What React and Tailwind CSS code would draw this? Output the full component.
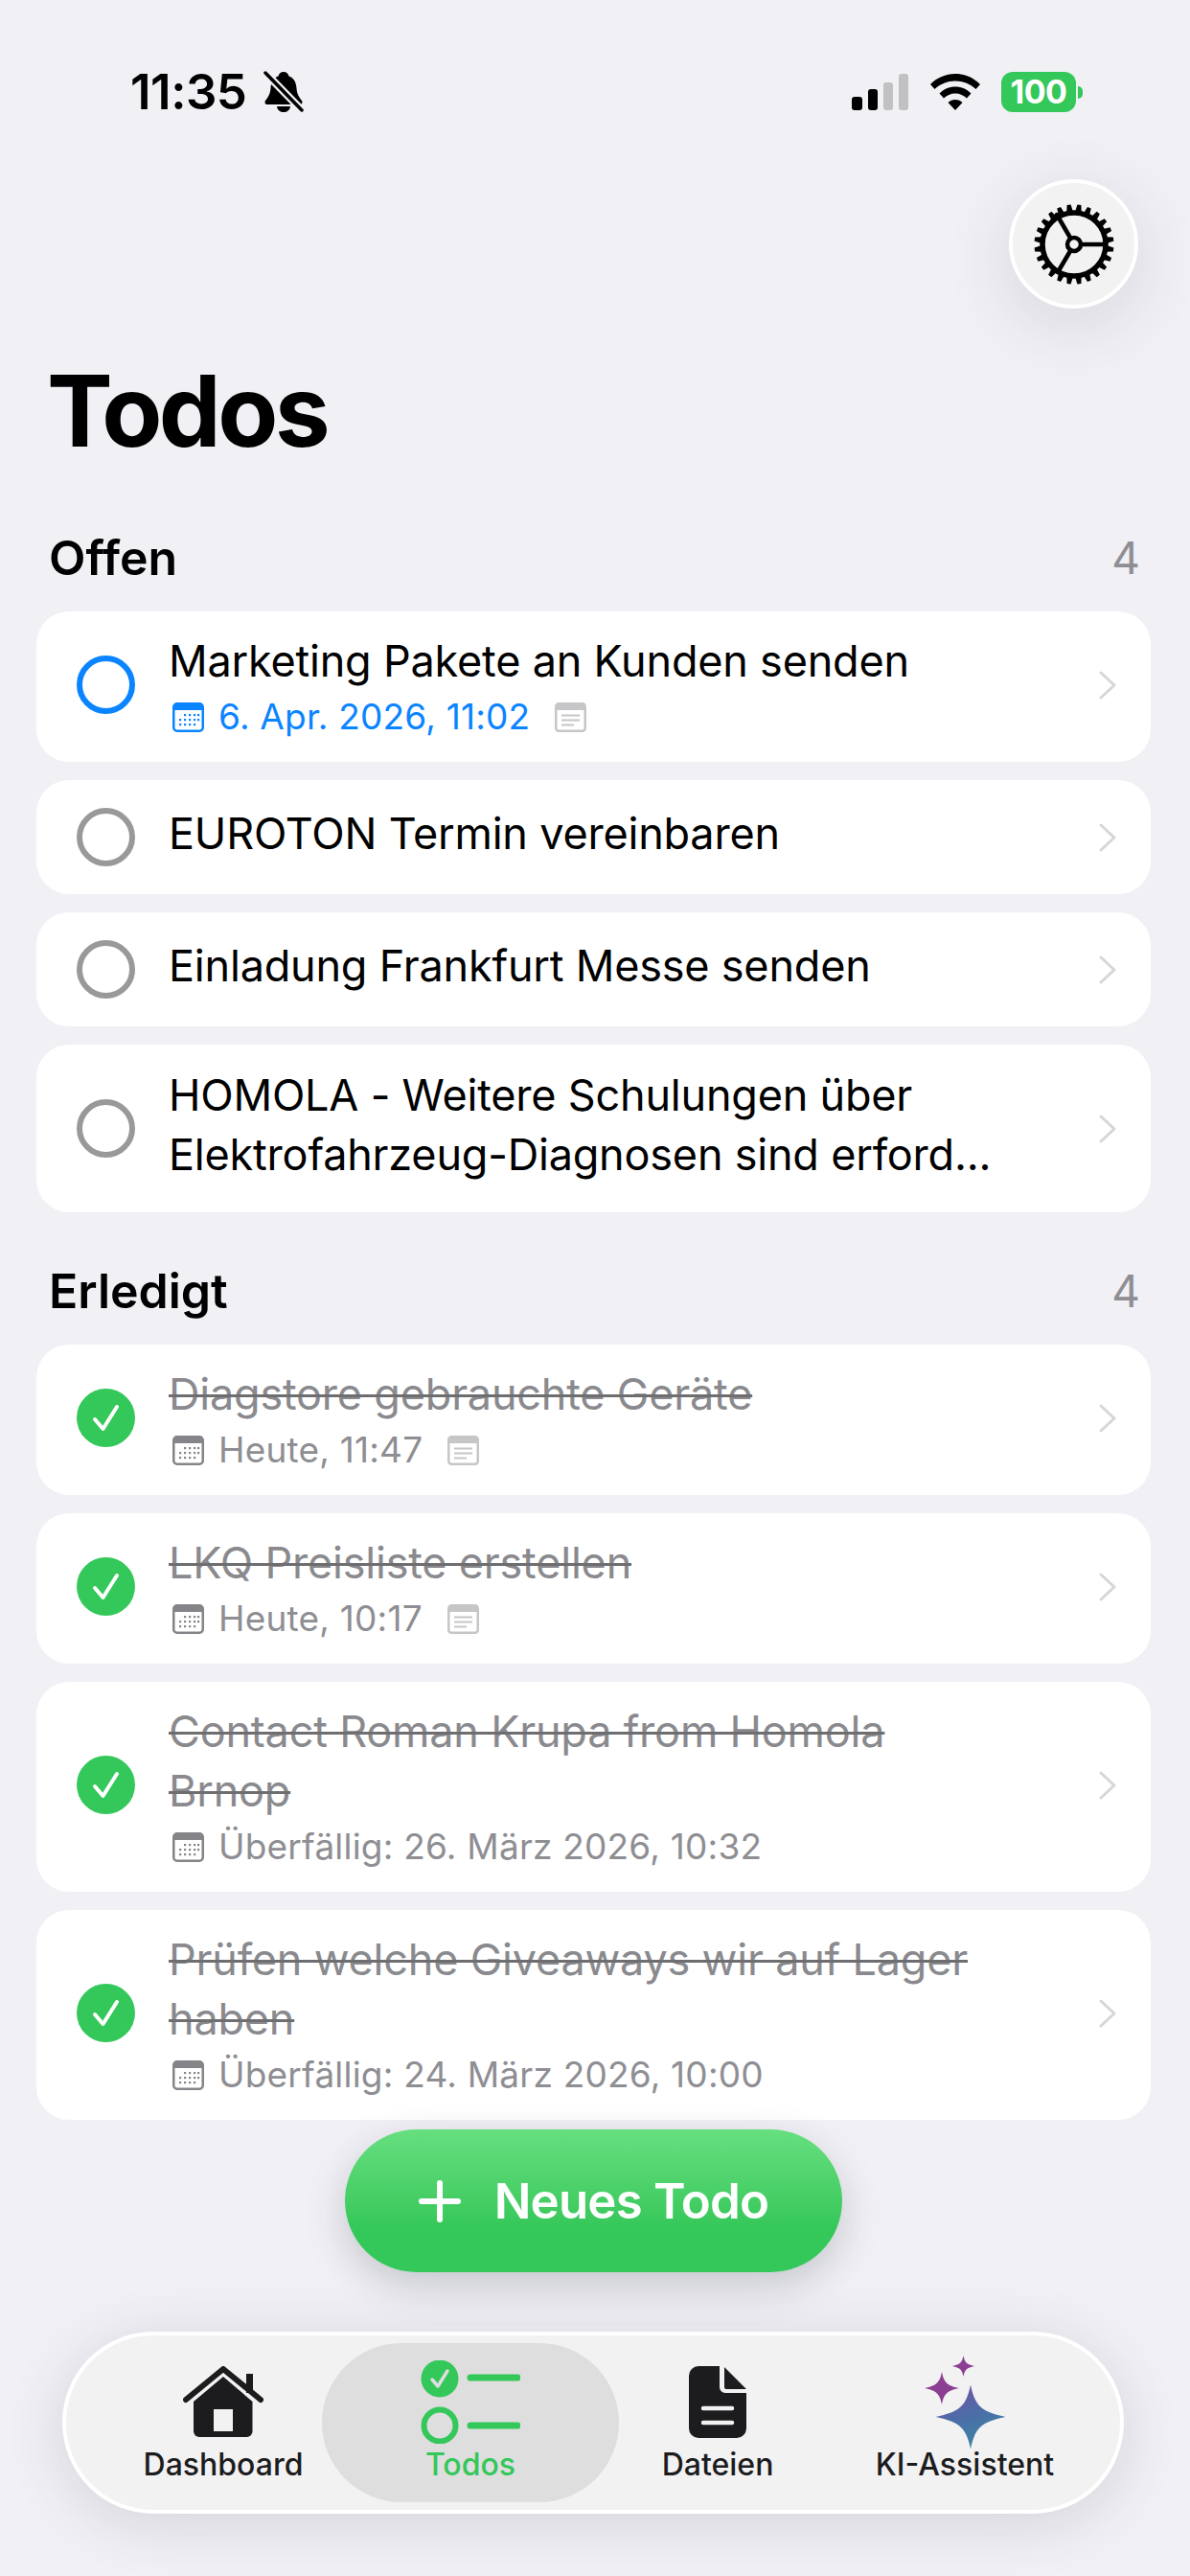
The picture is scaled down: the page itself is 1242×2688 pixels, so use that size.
import React from 'react';

const openTodos = [
  { title: 'Marketing Pakete an Kunden senden', meta: '6. Apr. 2026, 11:02', note: true, highlight: true },
  { title: 'EUROTON Termin vereinbaren' },
  { title: 'Einladung Frankfurt Messe senden' },
  { title: 'HOMOLA - Weitere Schulungen über Elektrofahrzeug-Diagnosen sind erford...' },
];

const doneTodos = [
  { title: 'Diagstore gebrauchte Geräte', meta: 'Heute, 11:47', note: true },
  { title: 'LKQ Preisliste erstellen', meta: 'Heute, 10:17', note: true },
  { title: 'Contact Roman Krupa from Homola Brnop', meta: 'Überfällig: 26. März 2026, 10:32' },
  { title: 'Prüfen welche Giveaways wir auf Lager haben', meta: 'Überfällig: 24. März 2026, 10:00' },
];

const STAR = 'M0 -1C.13 -.32 .32 -.16 1 0C.32 .16 .13 .32 0 1C-.13 .32 -.32 .16 -1 0C-.32 -.16 -.13 -.32 0 -1Z';

function BellOff() {
  return (
    <svg width="42" height="44" viewBox="0 0 42 44">
      <path d="M21 1c3 0 5 2 5.500 4.500C32 7.500 34 12 34.500 18c.4 5 1.500 8 5.500 13 1 1.500 .5 4-2 4H4c-2.500 0-3-2.500-2-4 4-5 5-8 5.500-13C8 12 10 7.500 15.500 5.500 16 3 18 1 21 1Z" fill="#000" />
      <path d="M14 37h14c-.5 4-3.500 6-7 6s-6.500-2-7-6Z" fill="#000" />
      <path d="M1 1L41 42" stroke="#f0f0f5" strokeWidth="8" />
      <path d="M2 2L40 41" stroke="#000" strokeWidth="3.500" strokeLinecap="round" />
    </svg>
  );
}

function StatusIcons() {
  return (
    <div className="flex items-center">
      <div className="flex items-end gap-[6px] h-[38px]">
        <div className="w-[11px] h-[14px] rounded-[3px] bg-black" />
        <div className="w-[10px] h-[22px] rounded-[3px] bg-black" />
        <div className="w-[10px] h-[29px] rounded-[3px] bg-[#c1c1c4]" />
        <div className="w-[10px] h-[38px] rounded-[3px] bg-[#c1c1c4]" />
      </div>
      <svg className="ml-[23px]" width="52" height="38" viewBox="0 0 52 38">
        <path d="M26 0C36 0 45 4 52 11L47.500 16C41.500 10.500 34 7.500 26 7.500S10.500 10.500 4.500 16L0 11C7 4 16 0 26 0Z" fill="#000" />
        <path d="M26 13.500C32.500 13.500 38 16 42.500 20.500L38 25.500C35 22.500 30.500 20.500 26 20.500S17 22.500 14 25.500L9.500 20.500C14 16 19.500 13.500 26 13.500Z" fill="#000" />
        <path d="M26 27C29 27 31.500 28 33.500 30L26 38L18.500 30C20.500 28 23 27 26 27Z" fill="#000" />
      </svg>
      <div className="ml-[22px] flex items-center">
        <div className="w-[78px] h-[42px] rounded-[12px] bg-[#34c759] flex items-center justify-center text-white text-[34px] font-bold leading-none tracking-[-0.5px]">100</div>
        <div className="ml-[2px] w-[5px] h-[13px] rounded-r-full bg-[#34c759]" />
      </div>
    </div>
  );
}

function GearIcon() {
  const teeth = Array.from({ length: 24 }, (_, i) => i * 15);
  return (
    <svg width="86" height="86" viewBox="-43 -43 86 86">
      {teeth.map(a => (
        <path key={a} d="M-3.500 -33L-2 -41.500H2L3.500 -33Z" fill="#000" transform={`rotate(${a + 7.5})`} />
      ))}
      <circle r="33" fill="none" stroke="#000" strokeWidth="5.500" />
      <g stroke="#000" strokeWidth="4.500" strokeLinecap="round">
        <path d="M8 0H33" />
        <path d="M-4 7L-17 29" />
        <path d="M-4 -7L-18 -31" />
      </g>
      <circle r="7" fill="none" stroke="#000" strokeWidth="4.500" />
    </svg>
  );
}

function CalendarIcon({ color }) {
  return (
    <svg width="33" height="31" viewBox="0 0 33 31">
      <rect x="1.250" y="1.250" width="30.500" height="28.500" rx="3.500" fill="#fff" stroke={color} strokeWidth="2.500" />
      <path d="M1 8V4.500A3.500 3.500 0 0 1 4.500 1H28.500A3.500 3.500 0 0 1 32 4.500V8Z" fill={color} />
      {[12, 17, 22].map(y => [8, 13, 18, 23, 27].map(x => (
        (y === 12 && x < 12) || (y === 22 && x > 24) ? null : <rect key={`${x}-${y}`} x={x - 1} y={y} width="2.200" height="2.200" fill={color} />
      )))}
    </svg>
  );
}

function NoteIcon() {
  return (
    <svg width="33" height="31" viewBox="0 0 33 31">
      <rect x="1.250" y="1.250" width="30.500" height="28.500" rx="3" fill="#fff" stroke="#c6c6c8" strokeWidth="2.500" />
      <path d="M1 8V4A3 3 0 0 1 4 1H29A3 3 0 0 1 32 4V8Z" fill="#c6c6c8" />
      <path d="M7 13.500H26M7 18.500H26M7 23.500H20" stroke="#c6c6c8" strokeWidth="2" />
    </svg>
  );
}

function Chevron() {
  return (
    <svg className="shrink-0" width="20" height="32" viewBox="0 0 20 32" fill="none">
      <path d="M3 3L17 16L3 29" stroke="#d6d6d8" strokeWidth="3" strokeLinecap="round" strokeLinejoin="round" />
    </svg>
  );
}

function StatusCircle({ done, highlight }) {
  if (done) {
    return (
      <div className="shrink-0 w-[61px] h-[61px] rounded-full bg-[#34c759] flex items-center justify-center">
        <svg width="30" height="30" viewBox="0 0 30 30" fill="none">
          <path d="M3 16L11.500 26L26 3" stroke="#fff" strokeWidth="4" strokeLinecap="round" strokeLinejoin="round" />
        </svg>
      </div>
    );
  }
  return (
    <div className={`shrink-0 w-[61px] h-[61px] rounded-full border-[6px] ${highlight ? 'border-[#0a84ff]' : 'border-[#999999]'}`} />
  );
}

function TodoCard({ todo, done }) {
  const twoLine = todo.title.length > 36;
  const padding = todo.meta ? 'pt-[21px] pb-[25px]' : twoLine ? 'py-[21.5px]' : 'py-[24.5px]';
  return (
    <div className={`flex items-center bg-white rounded-[34px] pl-[42px] pr-[35px] ${padding}`}>
      <StatusCircle done={done} highlight={todo.highlight} />
      <div className={`ml-[35px] w-[866px] shrink-0 ${todo.meta ? '' : 'pb-[8px]'}`}>
        <div className={`text-[45px] leading-[62px] tracking-[-0.2px] ${done ? 'text-[#8a8a8e] line-through decoration-[#6e6e70] decoration-[3px]' : 'text-black'}`}>
          {todo.title}
        </div>
        {todo.meta && (
          <div className={`mt-[5px] flex items-center h-[44px] text-[37px] tracking-[0.2px] ${todo.highlight ? 'text-[#0a84ff]' : 'text-[#8e8e93]'}`}>
            <span className="ml-[4px] flex"><CalendarIcon color={todo.highlight ? '#0a84ff' : '#858589'} /></span>
            <span className="ml-[15px]">{todo.meta}</span>
            {todo.note && <span className="ml-[26px] flex"><NoteIcon /></span>}
          </div>
        )}
      </div>
      <div className="ml-auto flex">
        <Chevron />
      </div>
    </div>
  );
}

function Section({ title, todos, done, className }) {
  return (
    <section className={className}>
      <div className="flex items-center justify-between pl-[13px] pr-[11px] h-[60px] mb-[26px]">
        <h2 className="text-[50px] leading-[60px] font-semibold text-black tracking-[0px]">{title}</h2>
        <span className="text-[46px] leading-[60px] text-[#8e8e93]">{todos.length}</span>
      </div>
      <div className="flex flex-col gap-[19px]">
        {todos.map(t => <TodoCard key={t.title} todo={t} done={done} />)}
      </div>
    </section>
  );
}

function NavItem({ label, active, children }) {
  return (
    <div className={`flex flex-col items-center rounded-[83px] h-[166px] ${active ? 'bg-[#dedede] w-[310px] -mx-[26px] text-[#34c759]' : 'w-[258px] text-[#1c1c1e]'}`}>
      <div className="h-[107px] flex items-end justify-center w-full">{children}</div>
      <span className="text-[32px] leading-[40px] font-medium">{label}</span>
    </div>
  );
}

export default function App() {
  return (
    <div className="relative w-[1242px] h-[2688px] overflow-hidden bg-[#f0f0f5] font-[Inter,sans-serif]">
      {/* status bar */}
      <div className="flex justify-between items-start h-[187px] pt-[73px] pl-[136px] pr-[112px]">
        <div className="flex items-center h-[46px]">
          <span className="text-[51px] leading-[46px] font-semibold text-black tracking-[-0.5px]">11:35</span>
          <span className="ml-[18px] flex"><BellOff /></span>
        </div>
        <div className="pt-[2px]">
          <StatusIcons />
        </div>
      </div>

      <div className="flex justify-end pr-[54px]">
        <div className="w-[135px] h-[135px] rounded-full bg-[#f2f2f3] border-[4px] border-white flex items-center justify-center shadow-[0_16px_70px_rgba(60,60,80,0.14)]">
          <GearIcon />
        </div>
      </div>

      <h1 className="mt-[47px] ml-[49px] text-[103px] leading-[120px] font-bold text-black tracking-[-3.5px]">Todos</h1>

      <div className="pl-[38px] pr-[41px] mt-[63px]">
        <Section title="Offen" todos={openTodos} />
        <Section title="Erledigt" todos={doneTodos} done className="mt-[52px]" />
      </div>

      {/* new todo button */}
      <div className="absolute top-[2222px] left-[360px] w-[519px] h-[149px] rounded-[75px] bg-gradient-to-b from-[#66df7f] via-[#34c759] via-70% to-[#34c759] flex items-center justify-center shadow-[0_14px_40px_rgba(50,50,70,0.22)]">
        <svg width="44" height="44" viewBox="0 0 44 44" fill="none">
          <path d="M22 3V41M3 22H41" stroke="#fff" strokeWidth="6" strokeLinecap="round" />
        </svg>
        <span className="ml-[35px] text-[51px] font-semibold text-white tracking-[-0.8px] leading-none">Neues Todo</span>
      </div>

      {/* tab bar */}
      <div className="absolute top-[2433px] left-[65px] w-[1108px] h-[190px] rounded-[95px] bg-[#f2f2f3] border-[4px] border-white flex items-center pl-[35px] shadow-[0_10px_60px_rgba(60,60,80,0.16)]">
        <NavItem label="Dashboard">
          <svg className="mb-[9px]" width="84" height="74" viewBox="0 0 84 74">
            <rect x="66" y="8" width="7" height="20" fill="#1c1c1e" />
            <path d="M3 35L42 3L81 35" fill="none" stroke="#1c1c1e" strokeWidth="6" strokeLinecap="round" strokeLinejoin="round" />
            <path d="M11 37L42 11L72.500 37V68a6 6 0 0 1-6 6H17a6 6 0 0 1-6-6Z" fill="#1c1c1e" />
            <rect x="32" y="45" width="20" height="23" fill="#f2f2f3" />
          </svg>
        </NavItem>
        <NavItem label="Todos" active>
          <svg className="mb-[2px]" width="104" height="87" viewBox="0 0 104 87">
            <circle cx="20" cy="19" r="19.500" fill="#34c759" />
            <path d="M12 20L18 27L28 11" fill="none" stroke="#dedede" strokeWidth="3.500" strokeLinecap="round" strokeLinejoin="round" />
            <circle cx="20" cy="68" r="16.500" fill="none" stroke="#34c759" strokeWidth="6" />
            <path d="M52 18H101M52 68H101" stroke="#34c759" strokeWidth="7" strokeLinecap="round" />
          </svg>
        </NavItem>
        <NavItem label="Dateien">
          <svg className="mb-[8px]" width="60" height="75" viewBox="0 0 60 75">
            <path d="M10 0H32V22a6 6 0 0 0 6 6H60V65a10 10 0 0 1-10 10H10A10 10 0 0 1 0 65V10A10 10 0 0 1 10 0Z" fill="#1c1c1e" />
            <path d="M37 1L60 24H39a2 2 0 0 1-2-2Z" fill="#1c1c1e" />
            <path d="M15 44H45M15 59H45" stroke="#f2f2f3" strokeWidth="4.500" strokeLinecap="round" />
          </svg>
        </NavItem>
        <NavItem label="KI-Assistent">
          <svg className="-mb-[3px]" width="85" height="97" viewBox="0 0 85 97">
            <defs>
              <linearGradient id="bigStar" x1="0" y1="0" x2="0.4" y2="1">
                <stop offset="0%" stopColor="#7a4f9f" />
                <stop offset="55%" stopColor="#4c6ca8" />
                <stop offset="100%" stopColor="#3f83a3" />
              </linearGradient>
            </defs>
            <path d={STAR} fill="url(#bigStar)" transform="translate(48 64) scale(36.500 33.500)" />
            <path d={STAR} fill="#8c3f92" transform="translate(18 34) scale(18 17)" />
            <path d={STAR} fill="#8c3f92" transform="translate(40.500 11) scale(11.500 11)" />
          </svg>
        </NavItem>
      </div>
    </div>
  );
}
